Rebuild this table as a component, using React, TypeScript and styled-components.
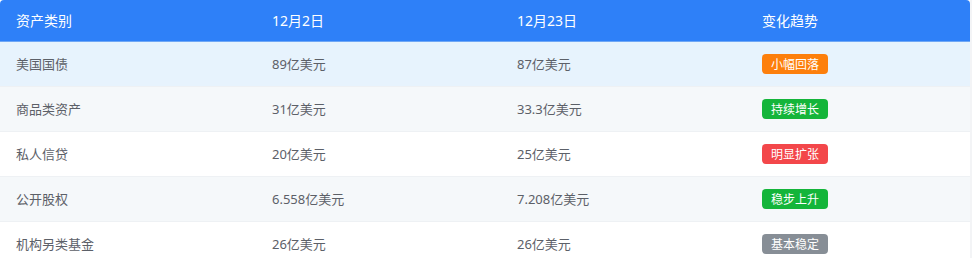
import React from 'react';
import styled, { createGlobalStyle } from 'styled-components';

type Tone = 'orange' | 'green' | 'red' | 'gray';

interface Row {
  name: string;
  dec2: string;
  dec23: string;
  trend: string;
  tone: Tone;
}

const rows: Row[] = [
  { name: '美国国债', dec2: '89亿美元', dec23: '87亿美元', trend: '小幅回落', tone: 'orange' },
  { name: '商品类资产', dec2: '31亿美元', dec23: '33.3亿美元', trend: '持续增长', tone: 'green' },
  { name: '私人信贷', dec2: '20亿美元', dec23: '25亿美元', trend: '明显扩张', tone: 'red' },
  { name: '公开股权', dec2: '6.558亿美元', dec23: '7.208亿美元', trend: '稳步上升', tone: 'green' },
  { name: '机构另类基金', dec2: '26亿美元', dec23: '26亿美元', trend: '基本稳定', tone: 'gray' },
];

const toneColors: Record<Tone, string> = {
  orange: '#fd7f0c',
  green: '#14b53a',
  red: '#f3474a',
  gray: '#878e96',
};

const GlobalStyle = createGlobalStyle`
  body {
    margin: 0;
    background: #f3f4f6;
    font-family: "Noto Sans", "Noto Sans CJK SC", sans-serif;
  }
`;

const Page = styled.div`
  width: 970px;
  background: #ffffff;
`;

const Table = styled.table`
  width: 970px;
  border-collapse: collapse;
  table-layout: fixed;
  border-radius: 4px 4px 0 0;
  overflow: hidden;
`;

const HeadCell = styled.th<{ $w?: number }>`
  width: ${p => (p.$w ? `${p.$w}px` : 'auto')};
  height: 41px;
  padding: 0 0 0 16px;
  box-sizing: border-box;
  background: #2e80f8;
  color: #ffffff;
  font-size: 14px;
  font-weight: 400;
  text-align: left;
  border-bottom: 1px solid #6fa7f5;
`;

const BodyRow = styled.tr<{ $bg: string }>`
  background: ${p => p.$bg};
`;

const Cell = styled.td`
  height: 45px;
  padding: 0 0 0 16px;
  box-sizing: border-box;
  color: #5c6068;
  font-size: 13px;
  border-bottom: 1px solid #eef1f4;
`;

const Badge = styled.span<{ $tone: Tone }>`
  display: inline-flex;
  align-items: center;
  justify-content: center;
  width: 66px;
  height: 20px;
  border-radius: 4px;
  background: ${p => toneColors[p.$tone]};
  color: #ffffff;
  font-size: 12px;
`;

const rowBg = (i: number) => (i === 0 ? '#e7f3fd' : i % 2 === 1 ? '#f5f8fa' : '#ffffff');

export default function App() {
  return (
    <>
      <GlobalStyle />
      <Page>
        <Table>
          <thead>
            <tr>
              <HeadCell $w={256}>资产类别</HeadCell>
              <HeadCell $w={245}>12月2日</HeadCell>
              <HeadCell $w={245}>12月23日</HeadCell>
              <HeadCell>变化趋势</HeadCell>
            </tr>
          </thead>
          <tbody>
            {rows.map((r, i) => (
              <BodyRow key={r.name} $bg={rowBg(i)}>
                <Cell>{r.name}</Cell>
                <Cell>{r.dec2}</Cell>
                <Cell>{r.dec23}</Cell>
                <Cell>
                  <Badge $tone={r.tone}>{r.trend}</Badge>
                </Cell>
              </BodyRow>
            ))}
          </tbody>
        </Table>
      </Page>
    </>
  );
}
